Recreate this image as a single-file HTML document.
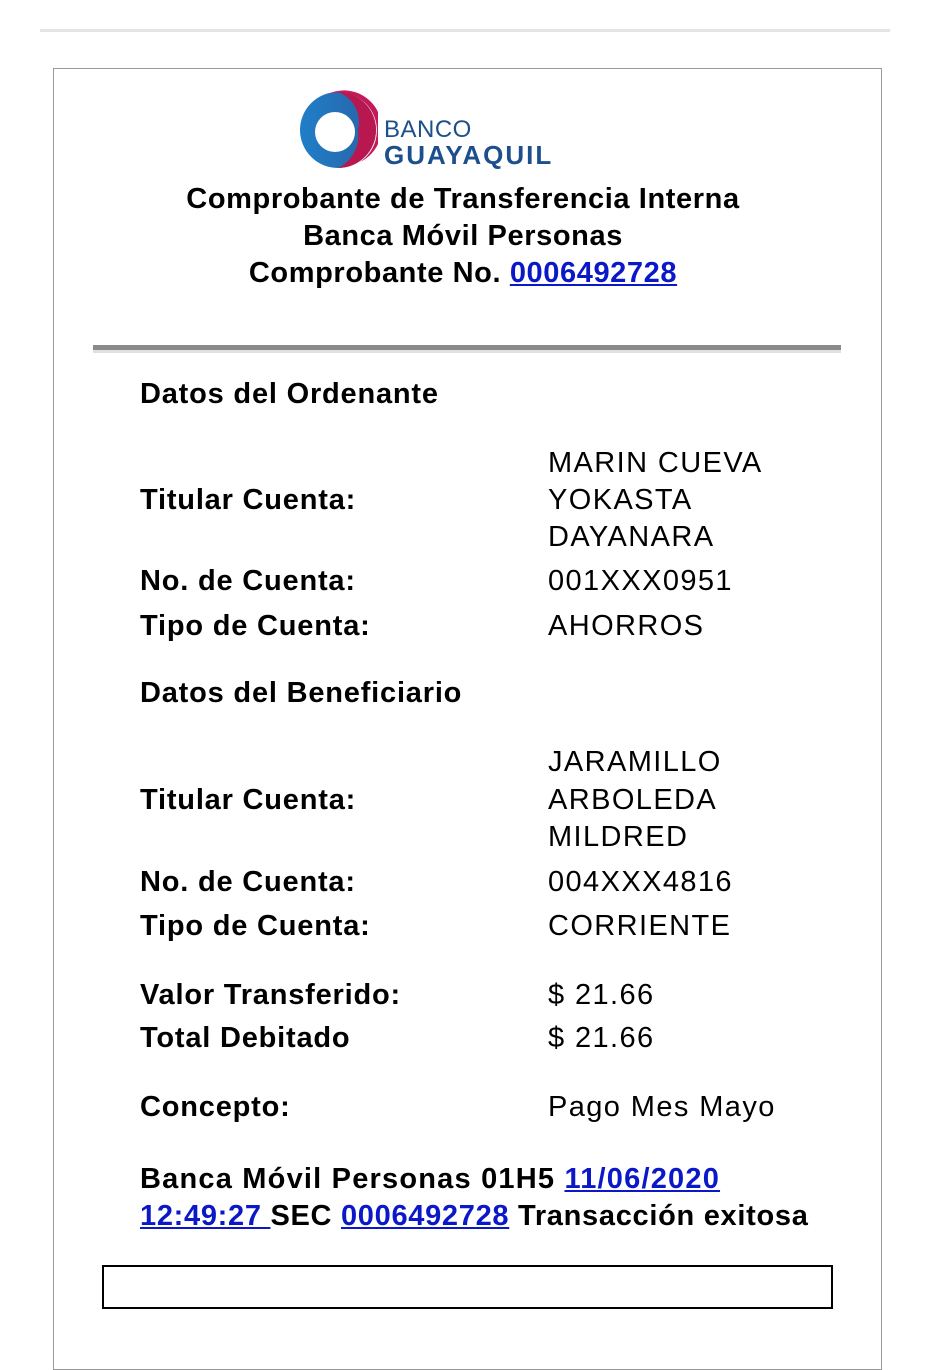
<!DOCTYPE html>
<html><head><meta charset="utf-8"><style>
body{margin:0;width:926px;height:1280px;overflow:hidden;background:#fff;font-family:"Liberation Sans",Arial,sans-serif;color:#000;position:relative}
.a{position:absolute;line-height:37px;white-space:nowrap;font-size:29px;letter-spacing:1.4px;margin-top:1px}
.b{font-weight:bold;letter-spacing:0.8px}
.c{left:0;width:926px;text-align:center;font-size:29px;letter-spacing:0.6px}
a{color:#0b18c8;text-decoration:underline}
</style></head><body>
<div style="position:absolute;left:40px;top:29px;width:850px;height:3px;background:#e4e4e4"></div>
<div style="position:absolute;left:53px;top:68px;width:827px;height:1300px;border:1px solid #999"></div>
<svg style="position:absolute;left:298px;top:90px" width="80" height="80" viewBox="0 0 80 80">
<defs><linearGradient id="g" x1="0" y1="0" x2="1" y2="0"><stop offset="0" stop-color="#1f7fc7"/><stop offset="1" stop-color="#2a62a8"/></linearGradient></defs>
<circle cx="40" cy="40" r="38" fill="url(#g)"/>
<path d="M30 4 A38 38 0 0 1 62 72 A30 30 0 0 0 30 4Z" fill="#c41a5a"/>
<path d="M40 2 A38 38 0 0 1 40 78 A36 36 0 0 0 60 40 A32 32 0 0 0 40 2Z" fill="#b8174f"/>
<circle cx="37" cy="42" r="20" fill="#fff"/>
</svg>
<div class="a" style="left:384px;top:116px;font-size:24px;line-height:26px;color:#1d4f8c;letter-spacing:0.5px">BANCO</div>
<div class="a b" style="left:384px;top:141px;font-size:26px;line-height:26px;color:#1d4f8c;letter-spacing:2px">GUAYAQUIL</div>
<div class="a b c" style="top:180px">Comprobante de Transferencia Interna</div>
<div class="a b c" style="top:217px">Banca Móvil Personas</div>
<div class="a b c" style="top:254px">Comprobante No. <a>0006492728</a></div>
<div style="position:absolute;left:93px;top:345px;width:748px;height:5px;background:#8a8a8a"></div>
<div style="position:absolute;left:93px;top:350px;width:748px;height:3px;background:#e0e0e0"></div>
<div class="a b" style="left:140px;top:375px">Datos del Ordenante</div>
<div class="a" style="left:548px;top:444px">MARIN CUEVA</div>
<div class="a b" style="left:140px;top:481px">Titular Cuenta:</div>
<div class="a" style="left:548px;top:481px">YOKASTA</div>
<div class="a" style="left:548px;top:518px">DAYANARA</div>
<div class="a b" style="left:140px;top:562px">No. de Cuenta:</div>
<div class="a" style="left:548px;top:562px">001XXX0951</div>
<div class="a b" style="left:140px;top:607px">Tipo de Cuenta:</div>
<div class="a" style="left:548px;top:607px">AHORROS</div>
<div class="a b" style="left:140px;top:674px">Datos del Beneficiario</div>
<div class="a" style="left:548px;top:743px">JARAMILLO</div>
<div class="a b" style="left:140px;top:781px">Titular Cuenta:</div>
<div class="a" style="left:548px;top:781px">ARBOLEDA</div>
<div class="a" style="left:548px;top:818px">MILDRED</div>
<div class="a b" style="left:140px;top:863px">No. de Cuenta:</div>
<div class="a" style="left:548px;top:863px">004XXX4816</div>
<div class="a b" style="left:140px;top:907px">Tipo de Cuenta:</div>
<div class="a" style="left:548px;top:907px">CORRIENTE</div>
<div class="a b" style="left:140px;top:976px">Valor Transferido:</div>
<div class="a" style="left:548px;top:976px">$ 21.66</div>
<div class="a b" style="left:140px;top:1019px">Total Debitado</div>
<div class="a" style="left:548px;top:1019px">$ 21.66</div>
<div class="a b" style="left:140px;top:1088px">Concepto:</div>
<div class="a" style="left:548px;top:1088px">Pago Mes Mayo</div>
<div class="a b" style="left:140px;top:1160px;letter-spacing:1.2px">Banca Móvil Personas 01H5 <a>11/06/2020</a></div>
<div class="a b" style="left:140px;top:1197px;letter-spacing:0.7px"><a>12:49:27 </a>SEC <a>0006492728</a> Transacción exitosa</div>
<div style="position:absolute;left:102px;top:1265px;width:727px;height:40px;border:2px solid #000"></div>
</body></html>
